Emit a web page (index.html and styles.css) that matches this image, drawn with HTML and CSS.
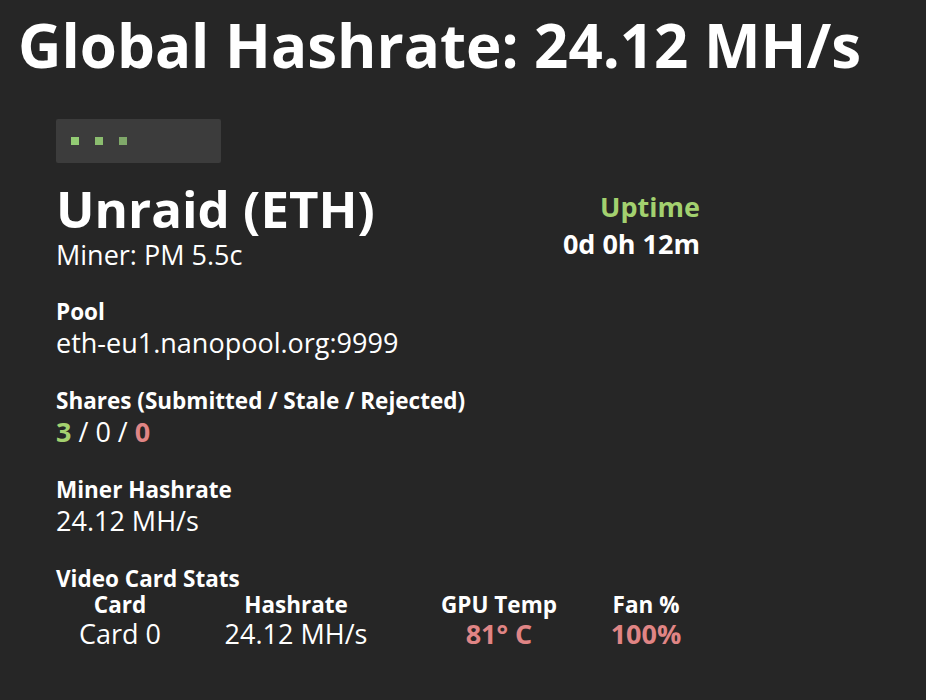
FILE: index.html
```html
<!DOCTYPE html>
<html>
<head>
  <title>Miner Stats</title>
  <meta name="viewport" content="width=device-width, initial-scale=1.0">
  <link rel="stylesheet" href="styles.css">
</head>
<body>
  <h1 class="global">Global Hashrate: 24.12 MH/s</h1>

  <div class="miner">
    <div class="loader">
      <span class="dot"></span>
      <span class="dot dot-2"></span>
      <span class="dot dot-3"></span>
    </div>

    <div class="miner-head">
      <div>
        <div class="miner-name">Unraid (ETH)</div>
        <div class="miner-ver">Miner: PM 5.5c</div>
      </div>
      <div class="uptime">
        <div class="uptime-label">Uptime</div>
        <div class="uptime-value">0d 0h 12m</div>
      </div>
    </div>

    <div class="stat">
      <div class="stat-label">Pool</div>
      <div class="stat-value">eth-eu1.nanopool.org:9999</div>
    </div>

    <div class="stat">
      <div class="stat-label">Shares (Submitted / Stale / Rejected)</div>
      <div class="stat-value"><span class="good">3</span> / 0 / <span class="bad">0</span></div>
    </div>

    <div class="stat">
      <div class="stat-label">Miner Hashrate</div>
      <div class="stat-value">24.12 MH/s</div>
    </div>

    <div class="stat cards">
      <div class="stat-label">Video Card Stats</div>
      <table class="card-table">
        <tr>
          <th class="col-card">Card</th>
          <th class="col-hash">Hashrate</th>
          <th class="col-temp">GPU Temp</th>
          <th class="col-fan">Fan %</th>
        </tr>
        <tr>
          <td>Card 0</td>
          <td>24.12 MH/s</td>
          <td class="bad">81° C</td>
          <td class="bad">100%</td>
        </tr>
      </table>
    </div>
  </div>
</body>
</html>
```

FILE: styles.css
```css
body {
  font-family: 'Open Sans', 'Noto Sans', sans-serif;
  background: #262626;
  color: #fff;
  margin: 0;
  padding: 0;
}

.global {
  margin: 0;
  padding: 9px 18px 0;
  font-size: 60px;
  font-weight: 700;
  line-height: 1.2;
}

.miner {
  margin-left: 56px;
  padding-top: 38px;
}

.loader {
  width: 165px;
  height: 44px;
  background: #3c3c3c;
  border-radius: 2px;
  display: flex;
  align-items: center;
  gap: 16px;
  padding-left: 15px;
  box-sizing: border-box;
}

.dot {
  width: 8px;
  height: 8px;
  background: #93cc74;
}

.dot-2 {
  background: #8bbd6f;
}

.dot-3 {
  background: #80a96a;
}

.miner-head {
  display: flex;
  justify-content: space-between;
  width: 644px;
  margin-top: 15px;
  margin-bottom: 2px;
}

.miner-name {
  font-size: 51px;
  font-weight: 700;
  line-height: 60px;
}

.miner-ver {
  font-size: 27px;
  line-height: 31px;
  padding-top: 1px;
}

.uptime {
  text-align: right;
  padding-top: 12px;
}

.uptime-label {
  color: #a3d16f;
  font-size: 27px;
  font-weight: 700;
  line-height: 34px;
}

.uptime-value {
  font-size: 27px;
  font-weight: 700;
  line-height: 34px;
  margin-top: 3px;
}

.stat {
  margin-top: 27px;
}

.stat-label {
  font-size: 22.5px;
  font-weight: 700;
  line-height: 30px;
}

.stat-value {
  font-size: 27px;
  line-height: 32px;
}

.good {
  color: #a3d16f;
  font-weight: 700;
}

.bad {
  color: #e08585;
  font-weight: 700;
}

.card-table {
  border-collapse: collapse;
}

.card-table th {
  font-size: 22.5px;
  font-weight: 700;
  line-height: 22px;
  padding: 0;
  text-align: center;
}

.card-table td {
  font-size: 27px;
  line-height: 36px;
  padding: 0;
  text-align: center;
}

.col-card {
  width: 128px;
}

.col-hash {
  width: 224px;
}

.col-temp {
  width: 182px;
}

.col-fan {
  width: 112px;
}
```
